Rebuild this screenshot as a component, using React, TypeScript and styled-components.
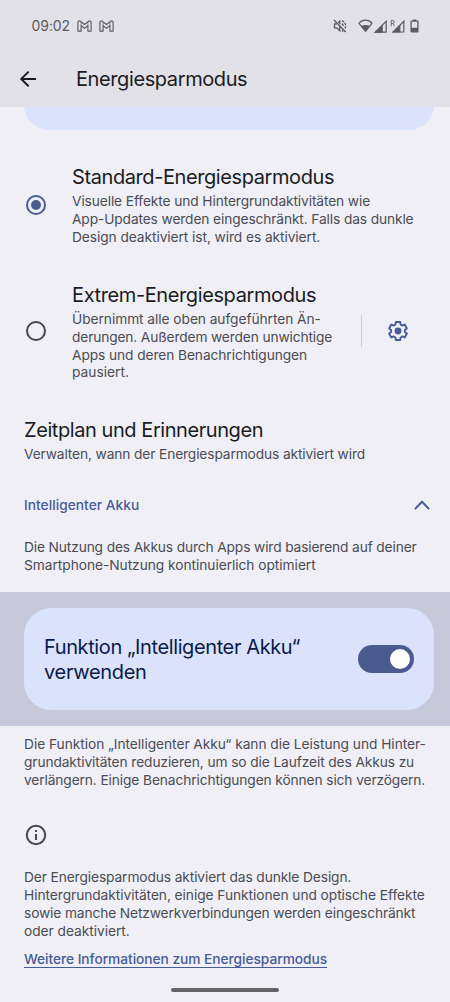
import React from 'react';
import styled, { createGlobalStyle } from 'styled-components';

const GlobalStyle = createGlobalStyle`
  *, *::before, *::after { box-sizing: border-box; }
  body { margin: 0; background: #f0eff6; }
`;

const color = {
  surface: '#f0eff6',
  header: '#e2e1e8',
  card: '#dae2fc',
  band: '#c7c9da',
  primary: '#4a5c8f',
  link: '#475b96',
  title: '#1a1b21',
  body: '#4b4c54',
  onCard: '#0a1a4a',
  status: '#5b5b60',
};

const Screen = styled.div`
  width: 450px;
  height: 1002px;
  display: flex;
  flex-direction: column;
  overflow: hidden;
  background: ${color.surface};
  font-family: Inter, Roboto, sans-serif;
`;

const Header = styled.header`
  flex: none;
  height: 107px;
  background: ${color.header};
`;

const StatusBar = styled.div`
  height: 52px;
  padding: 0 31px;
  display: flex;
  align-items: center;
  color: ${color.status};
`;

const Clock = styled.span`
  width: 46px;
  padding-left: 0.6px;
  font-size: 14px;
  line-height: 20px;
  letter-spacing: -0.1px;
`;

const Notifications = styled.div`
  flex: 1;
  display: flex;
  gap: 7px;
`;

const SystemIcons = styled.div`
  display: flex;
  align-items: center;
  svg { display: block; }
`;

const Spacer = styled.span<{ $w: number }>`
  width: ${p => p.$w}px;
`;

const Toolbar = styled.div`
  height: 53px;
  padding-left: 16px;
  display: flex;
  align-items: center;
  gap: 36px;
  color: ${color.title};
  h1 { padding-top: 1.4px; }
`;

const IconButton = styled.button<{ $color?: string }>`
  width: 24px;
  height: 24px;
  padding: 0;
  border: 0;
  background: none;
  color: ${p => p.$color ?? 'inherit'};
  flex: none;
  svg { display: block; }
`;

const Heading = styled.h2<{ $track?: number; $color?: string }>`
  margin: 0;
  font-size: 20px;
  line-height: 25px;
  font-weight: 400;
  letter-spacing: ${p => p.$track ?? -0.36}px;
  color: ${p => p.$color ?? color.title};
  white-space: nowrap;
`;

const Content = styled.main`
  flex: 1;
  min-height: 0;
  overflow: hidden;
  display: flex;
  flex-direction: column;
`;

const ScrolledCard = styled.div`
  flex: none;
  height: 50px;
  margin: -27.3px 16px 0 24px;
  border-radius: 27px;
  background: ${color.card};
`;

const OptionRow = styled.div<{ $top: number }>`
  display: flex;
  align-items: center;
  margin-top: ${p => p.$top}px;
  padding: 0 40px 0 26px;
`;

const OptionText = styled.div`
  flex: 1;
  margin-left: 26px;
`;

const Radio = styled.span<{ $on?: boolean }>`
  width: 20px;
  height: 20px;
  margin-bottom: 2.4px;
  flex: none;
  display: grid;
  place-items: center;
  border-radius: 50%;
  border: 2px solid ${p => (p.$on ? color.primary : '#45464f')};
  &::after {
    content: '';
    width: 10px;
    height: 10px;
    border-radius: 50%;
    background: ${p => (p.$on ? color.primary : 'transparent')};
  }
`;

const OptionAction = styled.div`
  display: flex;
  align-items: center;
  gap: 24px;
  margin-bottom: 2.4px;
`;

const Divider = styled.span`
  width: 1px;
  height: 32px;
  background: #cfced8;
`;

const Paragraph = styled.p<{ $top?: number }>`
  margin: ${p => p.$top ?? 0}px 0 0;
  font-size: 13.75px;
  line-height: 17.85px;
  color: ${color.body};
`;

const LineText = styled.span<{ $track: number }>`
  display: block;
  white-space: nowrap;
  letter-spacing: ${p => p.$track}px;
`;

const Section = styled.section<{ $top: number }>`
  margin-top: ${p => p.$top}px;
  padding: 0 24px;
`;

const Expander = styled.div`
  margin-top: 31px;
  padding: 0 20px 0 24px;
  height: 20px;
  display: flex;
  align-items: center;
  justify-content: space-between;
  color: ${color.link};
  font-size: 13.75px;
  font-weight: 500;
  letter-spacing: 0.02px;
`;

const Band = styled.div`
  flex: none;
  margin-top: 17.4px;
  height: 134.4px;
  padding: 16px 16px 16px 24px;
  background: ${color.band};
`;

const SwitchCard = styled.div`
  height: 102.4px;
  padding: 0 20px;
  display: flex;
  align-items: center;
  justify-content: space-between;
  border-radius: 27px;
  background: ${color.card};
`;

const SwitchLabel = styled.div`
  padding-top: 1.4px;
`;

const Toggle = styled.span`
  width: 56.5px;
  height: 28px;
  padding: 4px;
  display: flex;
  justify-content: flex-end;
  border-radius: 14px;
  background: ${color.primary};
  &::after {
    content: '';
    width: 20px;
    height: 20px;
    border-radius: 50%;
    background: #fff;
  }
`;

const InfoSection = styled.section`
  margin-top: 33.3px;
  padding: 0 24px;
  svg { display: block; color: #45464f; }
`;

const Link = styled.a`
  display: inline-block;
  margin-top: 9.8px;
  height: 17.5px;
  font-size: 13.75px;
  font-weight: 500;
  line-height: 18px;
  letter-spacing: -0.048px;
  white-space: nowrap;
  color: ${color.link};
  border-bottom: 1px solid ${color.link};
  text-decoration: none;
`;

const GestureBar = styled.div`
  flex: none;
  width: 108px;
  height: 4px;
  margin: 0 auto 10px;
  border-radius: 2px;
  background: #626267;
`;

type Line = [string, number];

const Lines = ({ lines, top }: { lines: Line[]; top?: number }) => (
  <Paragraph $top={top}>
    {lines.map(([text, track]) => (
      <LineText key={text} $track={track}>{text}</LineText>
    ))}
  </Paragraph>
);

const MailIcon = () => (
  <svg width="15" height="12" viewBox="0 0 15 12" fill="none" stroke="currentColor" strokeWidth="1.15" strokeLinejoin="round">
    <path d="M.9 2.3C.9.8 2.3.5 3.3 1.3l4.2 3.2 4.2-3.2c1-.8 2.4-.5 2.4 1v8.8h-3.2V5.6L7.5 8.2 4.1 5.6v5.5H.9z" />
    <path d="M4.1 5.6V2M10.9 5.6V2" strokeWidth=".7" />
  </svg>
);

const MutedIcon = () => (
  <svg width="14" height="14" viewBox="0 0 14 14" fill="none" stroke="currentColor" strokeWidth="1.35">
    <path d="M1 1l11.6 12" />
    <path d="M3.6 5H1.5v3.8h2.2l3 2.8V7.6M5.2 3.6l1.5-1.4v3" />
    <path d="M8.8 4.6c.9.5 1.4 1.4 1.4 2.5" />
    <path d="M8.8 1.8c2.3.6 3.8 2.7 3.8 5.1 0 1-.2 1.9-.7 2.6" strokeDasharray="2.6 .9" />
    <path d="M8.8 12.2c.5-.1 1-.3 1.4-.6" />
  </svg>
);

const WifiIcon = () => (
  <svg width="15" height="14" viewBox="0 0 15 14">
    <path d="M.9 4.2C4.7.1 10.3.1 14.1 4.2L7.5 12.4z" fill="none" stroke="currentColor" strokeWidth="1.2" strokeLinejoin="round" />
    <path d="M3 7.3c2.7-1.7 6.3-1.7 9 0l-4.5 5.3z" fill="currentColor" />
  </svg>
);

const SignalIcon = () => (
  <svg width="13" height="13" viewBox="0 0 13 13">
    <path d="M1.2 12.1L12.2 1.3v10.8z" fill="none" stroke="currentColor" strokeWidth="1.2" />
    <path d="M.3 12.7L8.8 4.4v8.3z" fill="currentColor" />
  </svg>
);

const RoamingSignalIcon = () => (
  <svg width="15" height="14" viewBox="0 0 15 14">
    <path d="M3.2 13L13.8 2.3V13z" fill="none" stroke="currentColor" strokeWidth="1.2" />
    <path d="M1.8 13.6L10.4 5.2v8.4z" fill="currentColor" />
    <path d="M1.2 7.2V1.4h1.6c2 0 2 2.9 0 2.9H1.2M2.9 4.3l1.6 2.9" fill="none" stroke="currentColor" strokeWidth=".9" />
  </svg>
);

const BatteryIcon = () => (
  <svg width="9" height="14" viewBox="0 0 9 14">
    <path d="M2.7.5h3.6V2H2.7z" fill="currentColor" />
    <rect x="1.1" y="2.2" width="6.8" height="10.6" rx=".6" fill="none" stroke="currentColor" strokeWidth="1.3" />
    <path d="M1 8.8h7v4H1z" fill="currentColor" />
  </svg>
);

const BackIcon = () => (
  <svg width="24" height="24" viewBox="0 0 24 24" fill="none" stroke="currentColor" strokeWidth="2">
    <path d="M12.6 4.6L5.3 11.9l7.3 7.3M5.5 11.9H20" />
  </svg>
);

const GearIcon = () => (
  <svg width="24" height="24" viewBox="-12 -12 24 24" fill="none" stroke="currentColor" strokeWidth="1.9" strokeLinejoin="round">
    <path d="M-2.2-9H2.2L2.6-6.5 4.4-5.4 6.7-6.4 8.9-2.6 6.9-1.1V1.1L8.9 2.6 6.7 6.4 4.4 5.4 2.6 6.5 2.2 9H-2.2L-2.6 6.5-4.4 5.4-6.7 6.4-8.9 2.6-6.9 1.1V-1.1L-8.9-2.6-6.7-6.4-4.4-5.4-2.6-6.5z" />
    <circle r="3.4" fill="currentColor" stroke="none" />
  </svg>
);

const ChevronUpIcon = () => (
  <svg width="16" height="10" viewBox="0 0 16 10" fill="none" stroke="currentColor" strokeWidth="2">
    <path d="M.9 9.1L8 1.8l7.1 7.3" />
  </svg>
);

const InfoIcon = () => (
  <svg width="24" height="24" viewBox="0 0 24 24" fill="none" stroke="currentColor" strokeWidth="2">
    <circle cx="12" cy="12" r="9.2" />
    <path d="M12 11v6M12 7v2" />
  </svg>
);

export default function App() {
  return (
    <Screen>
      <GlobalStyle />
      <Header>
        <StatusBar>
          <Clock>09:02</Clock>
          <Notifications>
            <MailIcon />
            <MailIcon />
          </Notifications>
          <SystemIcons>
            <MutedIcon />
            <Spacer $w={11} />
            <WifiIcon />
            <Spacer $w={1} />
            <SignalIcon />
            <Spacer $w={3} />
            <RoamingSignalIcon />
            <Spacer $w={5.5} />
            <BatteryIcon />
          </SystemIcons>
        </StatusBar>
        <Toolbar>
          <IconButton aria-label="Zurück"><BackIcon /></IconButton>
          <Heading as="h1" $track={-0.4}>Energiesparmodus</Heading>
        </Toolbar>
      </Header>

      <Content>
        <ScrolledCard />

        <OptionRow $top={35.4}>
          <Radio $on />
          <OptionText>
            <Heading $track={-0.41}>Standard-Energiesparmodus</Heading>
            <Lines
              top={3}
              lines={[
                ['Visuelle Effekte und Hintergrundaktivitäten wie', -0.11],
                ['App-Updates werden eingeschränkt. Falls das dunkle', -0.12],
                ['Design deaktiviert ist, wird es aktiviert.', -0.075],
              ]}
            />
          </OptionText>
        </OptionRow>

        <OptionRow $top={36.2}>
          <Radio />
          <OptionText>
            <Heading $track={-0.39}>Extrem-Energiesparmodus</Heading>
            <Lines
              top={3}
              lines={[
                ['Übernimmt alle oben aufgeführten Än-', -0.06],
                ['derungen. Außerdem werden unwichtige', -0.14],
                ['Apps und deren Benachrichtigungen', -0.09],
                ['pausiert.', 0],
              ]}
            />
          </OptionText>
          <OptionAction>
            <Divider />
            <IconButton aria-label="Einstellungen" $color={color.link}><GearIcon /></IconButton>
          </OptionAction>
        </OptionRow>

        <Section $top={35.4}>
          <Heading $track={-0.43}>Zeitplan und Erinnerungen</Heading>
          <Lines
            top={3.2}
            lines={[['Verwalten, wann der Energiesparmodus aktiviert wird', -0.125]]}
          />
        </Section>

        <Expander>
          Intelligenter Akku
          <ChevronUpIcon />
        </Expander>

        <Section $top={24.2}>
          <Lines
            lines={[
              ['Die Nutzung des Akkus durch Apps wird basierend auf deiner', -0.135],
              ['Smartphone-Nutzung kontinuierlich optimiert', -0.045],
            ]}
          />
        </Section>

        <Band>
          <SwitchCard>
            <SwitchLabel>
              <Heading as="div" $track={-0.39} $color={color.onCard}>Funktion „Intelligenter Akku“</Heading>
              <Heading as="div" $track={-0.31} $color={color.onCard}>verwenden</Heading>
            </SwitchLabel>
            <Toggle role="switch" aria-checked="true" />
          </SwitchCard>
        </Band>

        <Section $top={10}>
          <Lines
            lines={[
              ['Die Funktion „Intelligenter Akku“ kann die Leistung und Hinter-', -0.045],
              ['grundaktivitäten reduzieren, um so die Laufzeit des Akkus zu', -0.105],
              ['verlängern. Einige Benachrichtigungen können sich verzögern.', -0.115],
            ]}
          />
        </Section>

        <InfoSection>
          <InfoIcon />
          <Lines
            top={21.9}
            lines={[
              ['Der Energiesparmodus aktiviert das dunkle Design.', -0.11],
              ['Hintergrundaktivitäten, einige Funktionen und optische Effekte', -0.06],
              ['sowie manche Netzwerkverbindungen werden eingeschränkt', -0.13],
              ['oder deaktiviert.', -0.04],
            ]}
          />
          <Link>Weitere Informationen zum Energiesparmodus</Link>
        </InfoSection>
      </Content>
      <GestureBar />
    </Screen>
  );
}
